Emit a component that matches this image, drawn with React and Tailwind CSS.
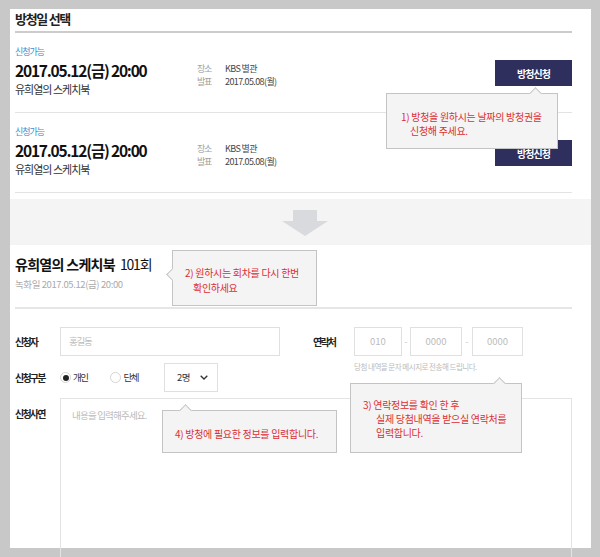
import React from "react";

const F = { fontFamily: '"Noto Sans CJK KR", "Noto Sans", sans-serif' };

function Tip({ className, arrow, children }) {
  return (
    <div className={"absolute bg-[#f4f4f4] border border-[#c4c4c4] text-[#dc2f35] text-[10px] tracking-[-0.3px] leading-[14px] " + className}>
      {arrow}
      {children}
    </div>
  );
}

function Item() {
  return (
    <div className="flex h-[80px] border-b border-[#e3e3e3]">
      <div className="w-[182px] pt-[13px]">
        <div className="text-[9px] leading-[12px] tracking-[-1px] text-[#3b8fd0]">신청가능</div>
        <div className="mt-[2px] text-[15.5px] leading-[20px] font-bold tracking-[-1.2px] text-[#111]">2017.05.12(금) 20:00</div>
        <div className="mt-[2px] text-[11px] leading-[14px] tracking-[-1px] text-[#333]">유희열의 스케치북</div>
      </div>
      <div className="pt-[29px] text-[9px] leading-[13px]">
        <div className="flex">
          <span className="w-[28px] text-[#a0a0a0] tracking-[-1.2px]">장소</span>
          <span className="text-[#444] tracking-[-0.6px]">KBS 별관</span>
        </div>
        <div className="flex">
          <span className="w-[28px] text-[#a0a0a0] tracking-[-1.2px]">발표</span>
          <span className="text-[#444] tracking-[-0.6px]">2017.05.08(월)</span>
        </div>
      </div>
      <div className="ml-auto mt-[27px] w-[77px] h-[26px] bg-[#2f2f5e] text-white text-[10px] font-bold tracking-[-1px] flex items-center justify-center">
        방청신청
      </div>
    </div>
  );
}

function Radio({ on }) {
  return (
    <span className="w-[11px] h-[11px] rounded-full border border-[#d5d5d5] bg-white flex items-center justify-center">
      {on && <span className="w-[6px] h-[6px] rounded-full bg-[#222]" />}
    </span>
  );
}

export default function App() {
  return (
    <div style={F} className="w-[600px] h-[557px] bg-[#c8c8c8] overflow-hidden pt-[9px] pl-[10px]">
      <div className="relative w-[581px] h-[539px] bg-white">
        <div className="pl-[5px] pr-[19px]">
          <div className="h-[24px] border-b-2 border-[#cccccc]">
            <div className="text-[13px] leading-[20px] font-bold tracking-[-1.3px] text-[#222]">방청일 선택</div>
          </div>
          <Item />
          <Item />
        </div>

        <div className="mt-[6px] h-[46px] bg-[#f4f4f5] pl-[272px] pt-[11px]">
          <svg width="46" height="26" viewBox="0 0 46 26">
            <path d="M11 0 H35 V11 H46 L23 26 L0 11 H11 Z" fill="#d9dadd" />
          </svg>
        </div>

        <div className="pl-[5px] pr-[19px]">
          <div className="pt-[9px] pb-[16px] border-b-2 border-[#e6e6e6]">
            <div className="leading-[20px] text-[#111] flex items-baseline">
              <span className="text-[14px] font-bold tracking-[-0.7px]">유희열의 스케치북</span>
              <span className="ml-[5px] text-[14px] tracking-[-1.2px]">101회</span>
            </div>
            <div className="mt-[3px] text-[9.5px] leading-[14px] tracking-[-0.4px] text-[#aaa]">녹화일 2017.05.12(금) 20:00</div>
          </div>

          <div className="flex mt-[18px]">
            <div className="w-[265px] flex flex-col gap-[7px]">
              <div className="flex items-center h-[29px]">
                <span className="w-[45px] text-[10px] font-bold tracking-[-1.8px] text-[#222]">신청자</span>
                <div className="w-[220px] h-full border border-[#e0e0e0] pl-[8px] flex items-center text-[9.5px] tracking-[-1.2px] text-[#bbb]">홍길동</div>
              </div>
              <div className="flex items-center h-[29px]">
                <span className="w-[45px] text-[10px] font-bold tracking-[-1.8px] text-[#222]">신청구분</span>
                <Radio on />
                <span className="ml-[2px] text-[9.5px] tracking-[-1.5px] text-[#333]">개인</span>
                <span className="ml-[23px]"><Radio /></span>
                <span className="ml-[2px] text-[9.5px] tracking-[-1.5px] text-[#333]">단체</span>
                <div className="ml-[26px] w-[54px] h-full border border-[#e0e0e0] pl-[12px] flex items-center gap-[10px] text-[9.5px] tracking-[-0.5px] text-[#333]">
                  <span>2명</span>
                  <svg width="8" height="5" viewBox="0 0 8 5">
                    <path d="M0.7 0.7 L4 4 L7.3 0.7" fill="none" stroke="#333" strokeWidth="1.3" />
                  </svg>
                </div>
              </div>
            </div>
            <div className="ml-[33px] flex flex-col">
              <div className="flex items-center h-[29px] text-[9.5px] text-[#bbb]">
                <span className="w-[41px] text-[10px] font-bold tracking-[-1.8px] text-[#222]">연락처</span>
                <div className="w-[48px] h-full border border-[#e0e0e0] flex items-center justify-center">010</div>
                <span className="w-[8px] text-center text-[#ccc]">-</span>
                <div className="w-[52px] h-full border border-[#e0e0e0] flex items-center justify-center">0000</div>
                <span className="w-[10px] text-center text-[#ccc]">-</span>
                <div className="w-[51px] h-full border border-[#e0e0e0] flex items-center justify-center">0000</div>
              </div>
              <p className="pl-[41px] mt-[6px] text-[7.5px] leading-[10px] tracking-[-0.5px] text-[#bbb]">당첨 내역을 문자 메시지로 전송해 드립니다.</p>
            </div>
          </div>

          <div className="flex mt-[6px]">
            <span className="w-[45px] pt-[9px] text-[10px] leading-[14px] font-bold tracking-[-1.8px] text-[#222]">신청사연</span>
            <div className="w-[512px] h-[170px] border border-[#e3e3e3] pl-[11px] pt-[9px] text-[9.5px] leading-[14px] tracking-[-0.8px] text-[#bbb]">내용을 입력해주세요.</div>
          </div>
        </div>

        <Tip
          className="left-[376px] top-[84px] w-[172px] h-[56px] pl-[14px] pt-[16px]"
          arrow={<span className="absolute top-[-5px] left-[144px] w-[9px] h-[9px] rotate-45 bg-[#f4f4f4] border-l border-t border-[#c4c4c4]" />}
        >
          <div>1) 방청을 원하시는 날짜의 방청권을</div>
          <div className="pl-[9px]">신청해 주세요.</div>
        </Tip>

        <Tip
          className="left-[162px] top-[241px] w-[145px] h-[56px] pl-[12px] pt-[14px] leading-[15px]"
          arrow={<span className="absolute left-[-5px] top-[19px] w-[9px] h-[9px] rotate-45 bg-[#f4f4f4] border-l border-b border-[#c4c4c4]" />}
        >
          <div>2) 원하시는 회차를 다시 한번</div>
          <div className="pl-[8px]">확인하세요</div>
        </Tip>

        <Tip
          className="left-[340px] top-[374px] w-[172px] h-[70px] pl-[12px] pt-[14px]"
          arrow={<span className="absolute top-[-5px] left-[144px] w-[9px] h-[9px] rotate-45 bg-[#f4f4f4] border-l border-t border-[#c4c4c4]" />}
        >
          <div>3) 연락정보를 확인 한 후</div>
          <div className="pl-[13px]">실제 당첨내역을 받으실 연락처를</div>
          <div className="pl-[13px]">입력합니다.</div>
        </Tip>

        <Tip
          className="left-[152px] top-[401px] w-[175px] h-[43px] pl-[12px] pt-[16px]"
          arrow={<span className="absolute top-[-5px] left-[18px] w-[9px] h-[9px] rotate-45 bg-[#f4f4f4] border-l border-t border-[#c4c4c4]" />}
        >
          <div>4) 방청에 필요한 정보를 입력합니다.</div>
        </Tip>
      </div>
    </div>
  );
}
